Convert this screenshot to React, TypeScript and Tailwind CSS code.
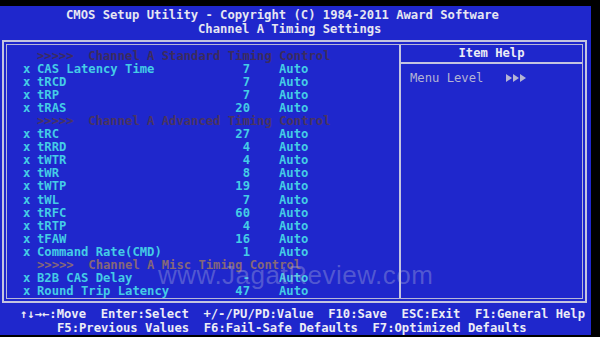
import React from 'react';

type Row =
    | { kind: 'head'; text: string; color: string }
    | { kind: 'item'; label: string; value: string };

const rows: Row[] = [
    { kind: 'head', text: 'Channel A Standard Timing Control', color: 'text-[#3c2c5e]' },
    { kind: 'item', label: 'CAS Latency Time', value: '7' },
    { kind: 'item', label: 'tRCD', value: '7' },
    { kind: 'item', label: 'tRP', value: '7' },
    { kind: 'item', label: 'tRAS', value: '20' },
    { kind: 'head', text: 'Channel A Advanced Timing Control', color: 'text-[#4a3560]' },
    { kind: 'item', label: 'tRC', value: '27' },
    { kind: 'item', label: 'tRRD', value: '4' },
    { kind: 'item', label: 'tWTR', value: '4' },
    { kind: 'item', label: 'tWR', value: '8' },
    { kind: 'item', label: 'tWTP', value: '19' },
    { kind: 'item', label: 'tWL', value: '7' },
    { kind: 'item', label: 'tRFC', value: '60' },
    { kind: 'item', label: 'tRTP', value: '4' },
    { kind: 'item', label: 'tFAW', value: '16' },
    { kind: 'item', label: 'Command Rate(CMD)', value: '1' },
    { kind: 'head', text: 'Channel A Misc Timing Control', color: 'text-[#866878]' },
    { kind: 'item', label: 'B2B CAS Delay', value: '-' },
    { kind: 'item', label: 'Round Trip Latency', value: '47' },
];

function Arrows() {
    return (
        <svg width="21" height="8" viewBox="0 0 21 8" className="ml-[23px]">
            <path d="M0 0 L6 4 L0 8 Z" fill="#b4b4d4" />
            <path d="M7 0 L13 4 L7 8 Z" fill="#b4b4d4" />
            <path d="M14 0 L20 4 L14 8 Z" fill="#b4b4d4" />
        </svg>
    );
}

export default function App() {
    return (
        <div
            className="relative w-[600px] h-[337px] bg-black overflow-hidden text-[12.2px]"
            style={{ fontFamily: '"DejaVu Sans Mono", "Liberation Mono", monospace' }}
        >
            <div className="mt-[6px] w-[591px] h-[329px] bg-[#1f27cc] flex flex-col">
                {/* title */}
                <div className="pt-[2px] font-bold text-[#e6e6f2] leading-[14px] whitespace-pre">
                    <div className="pl-[66px]">CMOS Setup Utility - Copyright (C) 1984-2011 Award Software</div>
                    <div className="pl-[198px]">Channel A Timing Settings</div>
                </div>

                {/* main box */}
                <div className="mt-[4px] ml-[2px] w-[585px] h-[263px] border-2 border-[#c4c4e0] p-[2px]">
                    <div className="h-full border border-[#b8b8d8] flex">
                        <div className="w-[394px] border-r-2 border-[#c4c4e0] pt-[5px] pl-[16px]">
                            {rows.map((r, i) =>
                                r.kind === 'head' ? (
                                    <div key={i} className={`h-[13.06px] leading-[13px] pl-[14px] whitespace-pre font-bold ${r.color}`}>
                                        {'>>>>>  ' + r.text}
                                    </div>
                                ) : (
                                    <div key={i} className="h-[13.06px] leading-[13px] flex whitespace-pre font-bold text-[#44cce6]">
                                        <span className="w-[14px]">x</span>
                                        <span className="w-[190px]">{r.label}</span>
                                        <span className="w-[23px] text-right">{r.value}</span>
                                        <span className="ml-[29px]">Auto</span>
                                    </div>
                                )
                            )}
                        </div>
                        <div className="flex-1 flex flex-col">
                            <div className="h-[19px] border-b-2 border-[#c4c4e0] flex items-center justify-center font-bold text-[#ececf6]">
                                Item Help
                            </div>
                            <div className="pt-[7px] pl-[9px] flex items-center leading-[14px] text-[#b4b4d4]">
                                <span>Menu Level</span>
                                <Arrows />
                            </div>
                        </div>
                    </div>
                </div>

                {/* footer */}
                <div className="mt-[4px] font-bold text-[#ececf6] leading-[14px] whitespace-pre">
                    <div className="pl-[20px]">{'↑↓→←:Move  Enter:Select  +/-/PU/PD:Value  F10:Save  ESC:Exit  F1:General Help'}</div>
                    <div className="pl-[57px]">{'F5:Previous Values  F6:Fail-Safe Defaults  F7:Optimized Defaults'}</div>
                </div>
            </div>

            {/* watermark */}
            <div
                className="absolute left-[158px] top-[256px] text-[26px] text-[#b4b6dc]/35 tracking-[0.5px]"
                style={{ fontFamily: '"Liberation Sans", Arial, sans-serif' }}
            >
                www.JagatReview.com
            </div>
        </div>
    );
}
